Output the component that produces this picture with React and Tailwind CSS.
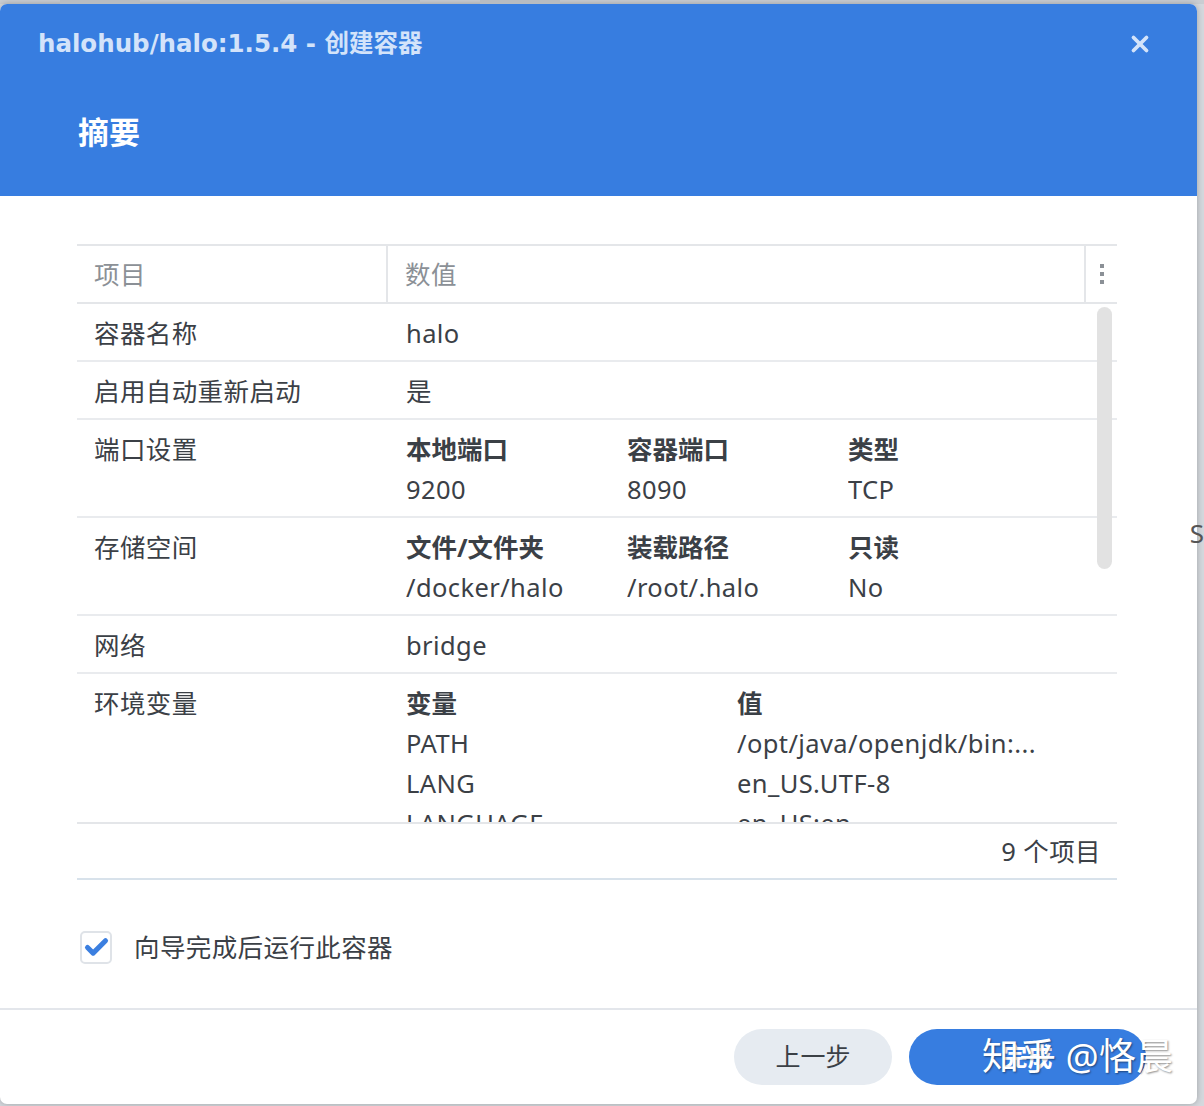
import { X, Check } from "lucide-react"

const font = { fontFamily: '"Noto Sans", "Noto Sans CJK SC", sans-serif' }

const rows = [
  { label: "容器名称", value: "halo" },
  { label: "启用自动重新启动", value: "是" },
  {
    label: "端口设置",
    cols: ["w-[221px]", "w-[221px]", "w-[221px]"],
    head: ["本地端口", "容器端口", "类型"],
    data: [["9200", "8090", "TCP"]],
  },
  {
    label: "存储空间",
    cols: ["w-[221px]", "w-[221px]", "w-[221px]"],
    head: ["文件/文件夹", "装载路径", "只读"],
    data: [["/docker/halo", "/root/.halo", "No"]],
  },
  { label: "网络", value: "bridge" },
  {
    label: "环境变量",
    cols: ["w-[331px]", "w-[331px]"],
    head: ["变量", "值"],
    data: [
      ["PATH", "/opt/java/openjdk/bin:..."],
      ["LANG", "en_US.UTF-8"],
      ["LANGUAGE", "en_US:en"],
      ["LC_ALL", "en_US.UTF-8"],
      ["JAVA_VERSION", "jdk-11.0.14.1+1"],
    ],
  },
]

const SubTable = ({ cols, head, data }) => (
  <div>
    <div className="flex">
      {head.map((h, i) => (
        <div key={h} className={`${cols[i]} font-bold text-[#3b4046] tracking-normal`}>{h}</div>
      ))}
    </div>
    {data.map((r, j) => (
      <div key={j} className="flex">
        {r.map((c, i) => (
          <div key={i} className={`${cols[i]} whitespace-nowrap overflow-hidden`}>{c}</div>
        ))}
      </div>
    ))}
  </div>
)

export default function App() {
  return (
    <div className="relative w-[1204px] h-[1106px] bg-[#d4d8dd] overflow-hidden" style={font}>
      {/* toolbar behind the dialog */}
      <div className="h-[4px] flex gap-[60px] bg-[#c9cdd2] pl-[60px]">
        <div className="w-[80px] bg-[#b8bcc1]"></div>
        <div className="w-[80px] bg-[#b8bcc1]"></div>
        <div className="w-[80px] bg-[#b8bcc1]"></div>
        <div className="w-[80px] bg-[#b8bcc1]"></div>
      </div>

      <div className="w-[1197px] h-[1100px] bg-white rounded-[7px] overflow-hidden shadow-[0_0_6px_rgba(0,0,0,0.25)] flex flex-col">
        {/* Header */}
        <div className="h-[192px] bg-[#377de0] shrink-0">
          <div className="flex items-center justify-between h-[80px] pl-[38px] pr-[44px]">
            <h2 className="text-[24.5px] font-bold text-[#d3e3fa]" style={{ fontFamily: '"DejaVu Sans", "Noto Sans CJK SC", sans-serif' }}>
              halohub/halo:1.5.4 - 创建容器
            </h2>
            <X className="w-[26px] h-[26px] text-[#d3e3fa]" strokeWidth={3.5} />
          </div>
          <h1 className="pl-[78px] pt-[33px] text-[31px] font-bold text-white leading-none">摘要</h1>
        </div>

        {/* Body */}
        <div className="px-[77px] pt-[48px] text-[25.5px] tracking-[0.4px] text-[#3b4046] w-[1194px]">
          <div className="border-t-2 border-[#e4e6e9]">
            {/* header row */}
            <div className="flex h-[58px] items-center border-b-2 border-[#e4e6e9] text-[#8b9096]">
              <div className="w-[311px] pl-[17px] h-full flex items-center border-r-2 border-[#e4e6e9]">项目</div>
              <div className="flex-1 pl-[17px]">数值</div>
              <div className="w-[33px] h-full border-l-2 border-[#e4e6e9] flex flex-col items-center justify-center gap-[4px]">
                <span className="w-[4px] h-[4px] bg-[#8b9096]"></span>
                <span className="w-[4px] h-[4px] bg-[#8b9096]"></span>
                <span className="w-[4px] h-[4px] bg-[#8b9096]"></span>
              </div>
            </div>

            {/* scrolling body */}
            <div className="relative h-[518px] overflow-hidden">
              {rows.map((r) => (
                <div key={r.label} className="flex border-b-2 border-[#e9ebee] pt-[9px] pb-[7px] leading-[40px]">
                  <div className="w-[311px] pl-[17px] shrink-0">{r.label}</div>
                  <div className="flex-1 pl-[18px]">
                    {r.value ? r.value : <SubTable cols={r.cols} head={r.head} data={r.data} />}
                  </div>
                </div>
              ))}
              <div className="absolute right-[5px] top-[3px] w-[15px] h-[262px] rounded-full bg-[#e2e2e2]"></div>
            </div>

            {/* footer row */}
            <div className="h-[58px] flex items-center justify-end pr-[16px] border-t-2 border-b-2 border-t-[#e4e6e9] border-b-[#d8e2eb]">
              9 个项目
            </div>
          </div>

          {/* checkbox */}
          <label className="flex items-center gap-[22px] mt-[48px] pl-[3px]">
            <span className="w-[32px] h-[33px] rounded-[5px] border-2 border-[#dfe3e8] flex items-center justify-center">
              <Check className="w-[27px] h-[27px] text-[#3b7fe0]" strokeWidth={4.5} />
            </span>
            <span>向导完成后运行此容器</span>
          </label>
        </div>

        {/* Footer */}
        <div className="mt-auto border-t-2 border-[#e3e6eb] h-[96px] flex items-center justify-end gap-[17px] pr-[51px] text-[25px]">
          <button className="w-[158px] h-[56px] rounded-full bg-[#e6ebf1] text-[#3b4046]">上一步</button>
          <div className="relative">
            <button className="w-[237px] h-[56px] rounded-full bg-[#377de0] text-white font-bold">完成</button>
            <span className="absolute left-[73px] top-[3px] text-[37px] leading-[48px] whitespace-nowrap text-white [text-shadow:1px_1px_2px_rgba(0,0,0,0.45)]">
              知乎 @恪晨
            </span>
          </div>
        </div>
      </div>

      {/* right edge of the window behind */}
      <div className="absolute right-0 top-[520px] text-[26px] text-[#555] leading-none">S</div>
    </div>
  )
}
